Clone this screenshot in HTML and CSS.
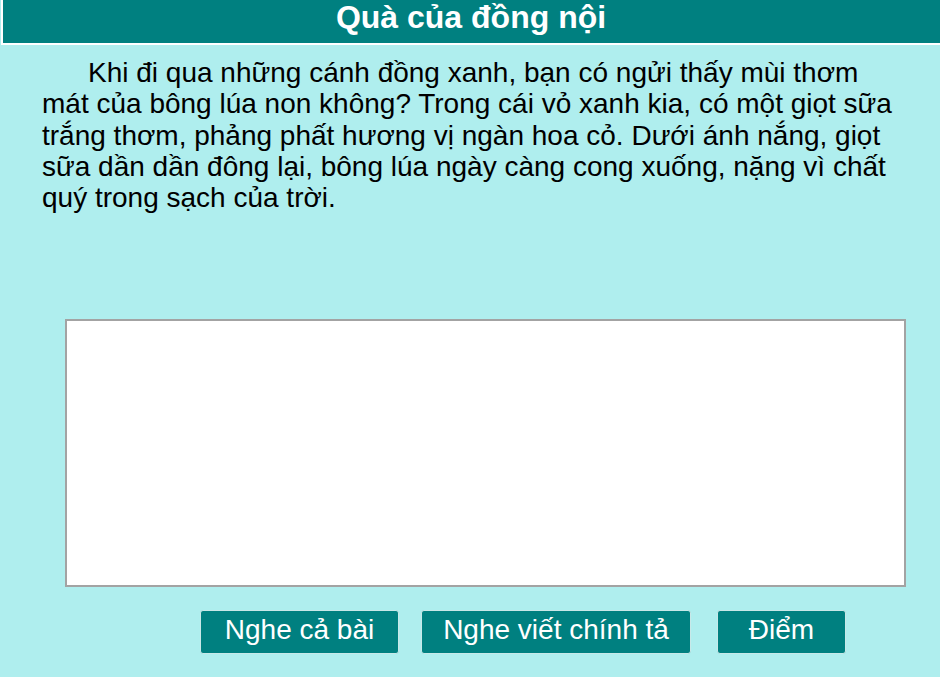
FILE: index.html
```html
<!DOCTYPE html>
<html lang="vi">
<head>
<meta charset="utf-8">
<title>Quà của đồng nội</title>
<link rel="stylesheet" href="styles.css">
</head>
<body>
<header class="title-bar">Quà của đồng nội</header>
<p class="passage">Khi đi qua những cánh đồng xanh, bạn có ngửi thấy mùi thơm mát của bông lúa non không? Trong cái vỏ xanh kia, có một giọt sữa trắng thơm, phảng phất hương vị ngàn hoa cỏ. Dưới ánh nắng, giọt sữa dần dần đông lại, bông lúa ngày càng cong xuống, nặng vì chất quý trong sạch của trời.</p>
<div class="answer-wrap"><textarea class="answer"></textarea></div>
<div class="actions">
  <button class="btn btn-all">Nghe cả bài</button>
  <button class="btn btn-dictate">Nghe viết chính tả</button>
  <button class="btn btn-score">Điểm</button>
</div>
</body>
</html>
```
FILE: styles.css
```css
html, body {
  margin: 0;
  padding: 0;
  background: #afeeee;
  font-family: "Liberation Sans", Arial, sans-serif;
  overflow: hidden;
}
.title-bar {
  margin-left: 1px;
  width: 960px;
  height: 43px;
  background: #008080;
  border-left: 2px solid #fff;
  border-bottom: 2px solid #fff;
  color: #fff;
  font-weight: bold;
  font-size: 32px;
  line-height: 34px;
  box-sizing: content-box;
  text-indent: -24px;
  text-align: center;
}
.passage {
  margin: 12px 40px 0 42px;
  font-size: 28px;
  line-height: 31.3px;
  text-indent: 46px;
  color: #000;
}
.answer-wrap {
  margin: 106px 0 0 65px;
  width: 841px;
  height: 268px;
}
.answer {
  display: block;
  box-sizing: border-box;
  width: 100%;
  height: 100%;
  margin: 0;
  border: 2px solid #a3a3a3;
  background: #fff;
  resize: none;
}
.actions {
  display: flex;
  margin: 23px 0 0 200px;
}
.btn {
  box-sizing: border-box;
  height: 44px;
  background: #008080;
  color: #fff;
  border: 1px solid #c8e8e8;
  border-radius: 3px;
  font-family: "Liberation Sans", Arial, sans-serif;
  font-size: 28px;
  padding: 0 0 5px 0;
  text-align: center;
}
.btn-all { width: 199px; }
.btn-dictate { width: 270px; margin-left: 22px; }
.btn-score { width: 129px; margin-left: 26px; }
```
